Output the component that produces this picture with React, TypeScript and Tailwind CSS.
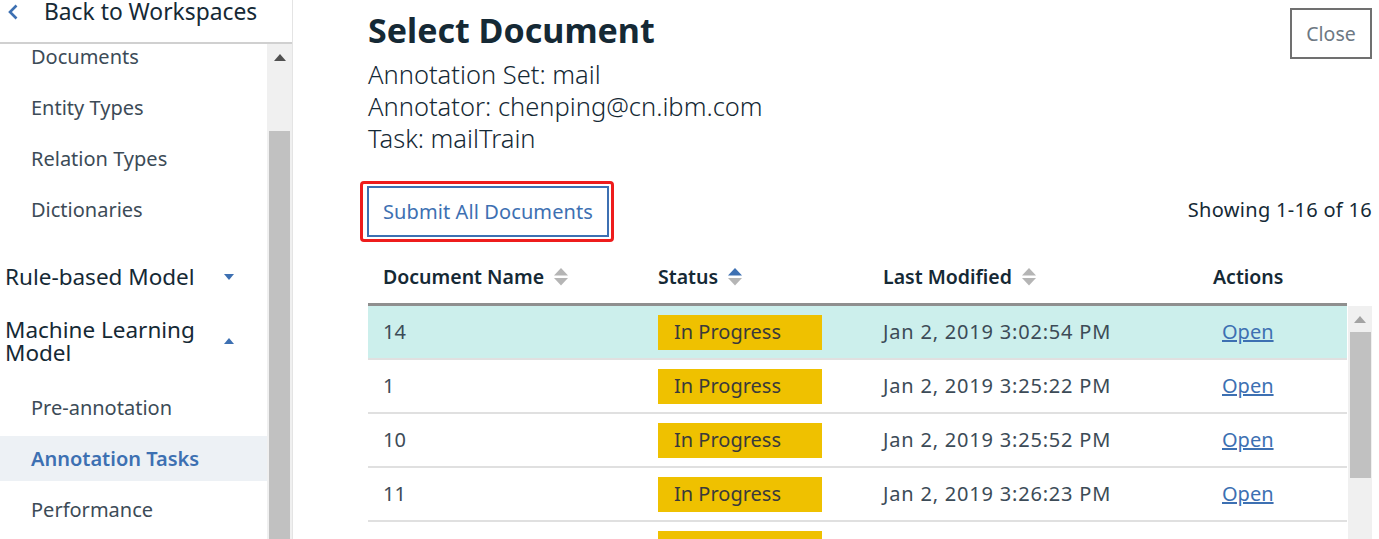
import React from "react";

interface Doc {
  name: string;
  status: string;
  modified: string;
}

const docs: Doc[] = [
  { name: "14", status: "In Progress", modified: "Jan 2, 2019 3:02:54 PM" },
  { name: "1", status: "In Progress", modified: "Jan 2, 2019 3:25:22 PM" },
  { name: "10", status: "In Progress", modified: "Jan 2, 2019 3:25:52 PM" },
  { name: "11", status: "In Progress", modified: "Jan 2, 2019 3:26:23 PM" },
  { name: "12", status: "In Progress", modified: "Jan 2, 2019 3:26:51 PM" },
  { name: "13", status: "In Progress", modified: "Jan 2, 2019 3:27:20 PM" },
];

const SortIcon = ({ active }: { active?: boolean }) => (
  <svg width="14" height="18" viewBox="0 0 14 18" className="ml-[10px] shrink-0">
    <path d="M7 0 L14 7.5 L0 7.5 Z" fill={active ? "#3d70b2" : "#b5b5b5"} />
    <path d="M0 10 L14 10 L7 17.5 Z" fill="#b5b5b5" />
  </svg>
);

const Caret = ({ up }: { up?: boolean }) => (
  <svg width="10" height="6" viewBox="0 0 10 6" className="mr-[33px]">
    {up ? <path d="M0 6 L5 0 L10 6 Z" fill="#3d70b2" /> : <path d="M0 0 L10 0 L5 6 Z" fill="#3d70b2" />}
  </svg>
);

function Sidebar() {
  const sub = "h-[45px] mb-[6px] flex items-center pl-[31px] text-[20px] text-[#3c4b57]";
  return (
    <aside className="w-[293px] shrink-0 flex flex-col border-r border-[#e4e4e4] bg-white">
      <div className="h-[44px] shrink-0 border-b-2 border-[#d0d0d0] flex items-start">
        <svg width="12" height="16" viewBox="0 0 12 16" className="ml-[7px] mt-[4px]">
          <path d="M9.5 1.5 L3 8 L9.5 14.5" stroke="#3d70b2" strokeWidth="2.6" fill="none" />
        </svg>
        <span className="ml-[25px] text-[22.8px] leading-[24px] text-[#152935]">Back to Workspaces</span>
      </div>
      <div className="flex flex-1 overflow-hidden">
        <div className="flex-1 overflow-hidden">
          <div className="-mt-[10px]">
            <div className={sub}>Documents</div>
            <div className={sub}>Entity Types</div>
            <div className={sub}>Relation Types</div>
            <div className={sub}>Dictionaries</div>
            <div className="mt-[20px] h-[50px] flex items-center justify-between pl-[5px] text-[22.5px] text-[#152935]">
              <span>Rule-based Model</span>
              <Caret />
            </div>
            <div className="pt-[16px] pb-[21px] flex items-center justify-between pl-[5px] text-[22.5px] leading-[23px] text-[#152935]">
              <span>
                Machine Learning
                <br />
                Model
              </span>
              <Caret up />
            </div>
            <div className={sub}>Pre-annotation</div>
            <div className="h-[45px] mb-[6px] flex items-center pl-[31px] text-[20px] font-semibold text-[#3d70b2] bg-[#edf1f5]">
              Annotation Tasks
            </div>
            <div className={sub}>Performance</div>
          </div>
        </div>
        <div className="w-[25px] shrink-0 bg-[#f0f0f0] flex flex-col items-center">
          <svg width="12" height="7" viewBox="0 0 12 7" className="mt-[10px]">
            <path d="M0 7 L6 0 L12 7 Z" fill="#505050" />
          </svg>
          <div className="mt-[70px] w-[21px] flex-1 bg-[#c1c1c1]" />
        </div>
      </div>
    </aside>
  );
}

export default function App() {
  return (
    <div className="flex h-[539px] w-[1379px] overflow-hidden bg-white font-['Noto_Sans',sans-serif]">
      <Sidebar />
      <main className="flex-1 flex flex-col pl-[75px] pr-[7px] pt-[8px] overflow-hidden">
        <div className="flex items-start justify-between">
          <div>
            <h1 className="text-[34px] leading-[44px] font-bold text-[#152935]">Select Document</h1>
            <div className="mt-[6px] text-[25.5px] leading-[32px] font-light text-[#152935]">
              <div>Annotation Set: mail</div>
              <div>Annotator: chenping@cn.ibm.com</div>
              <div>Task: mailTrain</div>
            </div>
          </div>
          <button className="w-[82px] h-[51px] border-2 border-[#707070] text-[19.5px] text-[#6d7883]">
            Close
          </button>
        </div>

        <div className="mt-[27px] flex items-center justify-between">
          <div className="-ml-[8px] border-[3px] border-[#ee1c1c] rounded-[4px] pl-[4px] pr-[2px] pt-[2px] pb-[2px]">
            <button className="w-[242px] h-[51px] border-2 border-[#3d70b2] text-[20px] tracking-[0.1px] text-[#3d70b2]">
              Submit All Documents
            </button>
          </div>
          <span className="-mt-[4px] text-[20px] tracking-[0.3px] text-[#152935]">Showing 1-16 of 16</span>
        </div>

        <div className="mt-[14px] flex flex-col flex-1 overflow-hidden">
          <div className="mr-[25px] h-[50px] pb-[6px] flex items-center border-b-[3px] border-[#8f8f8f] text-[19.5px] font-semibold text-[#152935]">
            <div className="w-[275px] pl-[15px] flex items-center">
              Document Name
              <SortIcon />
            </div>
            <div className="w-[225px] pl-[15px] flex items-center">
              Status
              <SortIcon active />
            </div>
            <div className="w-[330px] pl-[15px] flex items-center">
              Last Modified
              <SortIcon />
            </div>
            <div className="pl-[15px]">Actions</div>
          </div>
          <div className="flex flex-1 overflow-hidden">
            <div className="flex-1 overflow-hidden">
              {docs.map((d, i) => (
                <div
                  key={d.name}
                  className={`h-[54px] shrink-0 flex items-center border-b-2 border-[#e0e0e0] text-[20px] text-[#3c4b57] ${
                    i === 0 ? "bg-[#ccefec]" : "bg-white"
                  }`}
                >
                  <div className="w-[275px] pl-[15px]">{d.name}</div>
                  <div className="w-[225px] pl-[15px]">
                    <div className="w-[164px] h-[35px] bg-[#efc100] flex items-center pl-[16px] text-[#3a3a3a]">
                      {d.status}
                    </div>
                  </div>
                  <div className="w-[330px] pl-[15px] tracking-[0.8px]">{d.modified}</div>
                  <div className="pl-[24px]">
                    <a href="#" className="text-[#3d70b2] underline">
                      Open
                    </a>
                  </div>
                </div>
              ))}
            </div>
            <div className="w-[24px] ml-[1px] shrink-0 bg-[#f0f0f0] flex flex-col items-center">
              <svg width="12" height="7" viewBox="0 0 12 7" className="mt-[10px]">
                <path d="M0 7 L6 0 L12 7 Z" fill="#a3a3a3" />
              </svg>
              <div className="mt-[9px] w-[21px] h-[146px] bg-[#c1c1c1]" />
            </div>
          </div>
        </div>
      </main>
    </div>
  );
}
